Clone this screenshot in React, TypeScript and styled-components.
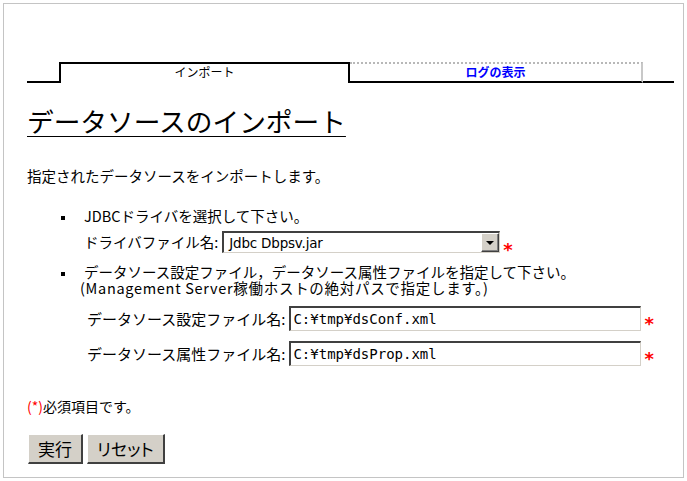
import styled, { createGlobalStyle } from 'styled-components';

const GlobalStyle = createGlobalStyle`
  html, body {
    margin: 0;
    padding: 0;
    background: #ffffff;
  }
  body {
    font-family: "Noto Sans CJK JP", "DejaVu Sans", sans-serif;
    color: #000000;
  }
`;

const JP = `"Noto Sans CJK JP", "DejaVu Sans", sans-serif`;

export default function App() {
  return (
    <>
      <GlobalStyle />
      <Frame>
        <TabBar>
          <TabGap $width={32} />
          <ActiveTab>インポート</ActiveTab>
          <InactiveTab>ログの表示</InactiveTab>
          <TabGap $width={31} />
        </TabBar>

        <Heading>データソースのインポート</Heading>

        <Description>指定されたデータソースをインポートします。</Description>

        <StepList>
          <StepItem>
            <Bullet />
            <StepText>
              <Line>JDBCドライバを選択して下さい。</Line>
            </StepText>
          </StepItem>
          <DriverRow>
            <DriverLabel>ドライバファイル名:</DriverLabel>
            <SelectBox>
              <SelectValue>Jdbc Dbpsv.jar</SelectValue>
              <ArrowButton>
                <Triangle />
              </ArrowButton>
            </SelectBox>
            <Required $drop={5}>*</Required>
          </DriverRow>
          <StepItem $top={11}>
            <Bullet />
            <StepText>
              <Line>データソース設定ファイル，データソース属性ファイルを指定して下さい。</Line>
              <Line $note>(Management Server稼働ホストの絶対パスで指定します。)</Line>
            </StepText>
          </StepItem>
        </StepList>

        <FileRows>
          <FileRow>
            <FileLabel>データソース設定ファイル名:</FileLabel>
            <PathInput defaultValue="C:¥tmp¥dsConf.xml" />
            <Required $drop={2}>*</Required>
          </FileRow>
          <FileRow>
            <FileLabel>データソース属性ファイル名:</FileLabel>
            <PathInput defaultValue="C:¥tmp¥dsProp.xml" />
            <Required $drop={2}>*</Required>
          </FileRow>
        </FileRows>

        <RequiredNote>
          <RedMark>(*)</RedMark>必須項目です。
        </RequiredNote>

        <Buttons>
          <Button type="button">実行</Button>
          <Button type="button">リセット</Button>
        </Buttons>
      </Frame>
    </>
  );
}

const Frame = styled.div`
  box-sizing: border-box;
  margin: 3px;
  width: 681px;
  height: 475px;
  border: 1px solid #c4c4c4;
  padding: 58px 0 0 23px;
`;

const TabBar = styled.div`
  display: flex;
  height: 21px;
`;

const TabGap = styled.div<{ $width: number }>`
  box-sizing: border-box;
  width: ${(p) => p.$width}px;
  height: 21px;
  border-bottom: 2px solid #000000;
`;

const ActiveTab = styled.div`
  box-sizing: border-box;
  width: 291px;
  height: 21px;
  border: 2px solid #000000;
  border-bottom: none;
  text-align: center;
  font-family: ${JP};
  font-size: 12px;
  line-height: 15px;
`;

const InactiveTab = styled.div`
  box-sizing: border-box;
  width: 293px;
  height: 21px;
  border-top: 2px dotted #b8b8b8;
  border-right: 2px solid #c8c8c8;
  border-bottom: 2px solid #000000;
  text-align: center;
  font-family: ${JP};
  font-size: 12px;
  font-weight: bold;
  line-height: 15px;
  color: #0000ff;
`;

const Heading = styled.h1`
  margin: 23px 0 0;
  width: fit-content;
  font-family: ${JP};
  font-size: 26.7px;
  font-weight: normal;
  line-height: 30px;
  text-decoration: underline;
  text-decoration-thickness: 1px;
  text-underline-offset: 4px;
`;

const Description = styled.p`
  margin: 31px 0 0;
  font-size: 14.5px;
  line-height: 18px;
`;

const StepList = styled.div`
  margin: 23px 0 0;
  padding-left: 34px;
`;

const StepItem = styled.div<{ $top?: number }>`
  display: flex;
  align-items: flex-start;
  margin-top: ${(p) => p.$top ?? 0}px;
`;

const Bullet = styled.span`
  flex: none;
  width: 4px;
  height: 4px;
  margin: 8px 19px 0 0;
  background: #000000;
`;

const StepText = styled.div`
  display: flex;
  flex-direction: column;
  font-size: 14.5px;
`;

const Line = styled.div<{ $note?: boolean }>`
  height: 16px;
  line-height: 16px;
  white-space: nowrap;
  margin-left: ${(p) => (p.$note ? -4 : 0)}px;
  letter-spacing: ${(p) => (p.$note ? 0.7 : 0)}px;
`;

const DriverRow = styled.div`
  display: flex;
  align-items: center;
  margin: 7px 0 0 23px;
`;

const DriverLabel = styled.span`
  font-size: 14.5px;
  line-height: 18px;
  margin-right: 4px;
`;

const SelectBox = styled.div`
  box-sizing: border-box;
  display: flex;
  align-items: center;
  width: 278px;
  height: 22px;
  border-top: 2px solid #404040;
  border-left: 2px solid #404040;
  border-right: 1px solid #d4d0c8;
  border-bottom: 1px solid #d4d0c8;
  background: #ffffff;
`;

const SelectValue = styled.span`
  flex: 1;
  padding-left: 5px;
  font-family: "DejaVu Sans", sans-serif;
  font-size: 13.5px;
  letter-spacing: -0.2px;
`;

const ArrowButton = styled.span`
  box-sizing: border-box;
  display: flex;
  align-items: center;
  justify-content: center;
  width: 18px;
  height: 19px;
  background: #d4d0c8;
  border-top: 1px solid #ffffff;
  border-left: 1px solid #ffffff;
  border-right: 1px solid #404040;
  border-bottom: 1px solid #404040;
  box-shadow: inset -1px -1px 0 #808080;
`;

const Triangle = styled.span`
  width: 0;
  height: 0;
  border-left: 4px solid transparent;
  border-right: 4px solid transparent;
  border-top: 4px solid #000000;
`;

const Required = styled.span<{ $drop: number }>`
  margin-left: 3px;
  padding-top: ${(p) => 6 + p.$drop}px;
  margin-bottom: ${(p) => -p.$drop}px;
  color: #ff0000;
  font-family: "DejaVu Sans", sans-serif;
  font-size: 18px;
  font-weight: bold;
  line-height: 14px;
`;

const FileRows = styled.div`
  display: flex;
  flex-direction: column;
  gap: 10px;
  margin: 10px 0 0 60px;
`;

const FileRow = styled.div`
  display: flex;
  align-items: center;
`;

const FileLabel = styled.span`
  font-size: 15px;
  line-height: 18px;
  margin-right: 4px;
`;

const PathInput = styled.input`
  box-sizing: border-box;
  width: 352px;
  height: 25px;
  margin: 0;
  padding: 0 0 0 2px;
  border-top: 2px solid #404040;
  border-left: 2px solid #404040;
  border-right: 1px solid #d4d0c8;
  border-bottom: 1px solid #d4d0c8;
  font-family: "DejaVu Sans Mono", monospace;
  font-size: 14px;
  color: #000000;
  background: #ffffff;
  outline: none;
`;

const RequiredNote = styled.p`
  margin: 31px 0 0;
  font-size: 14px;
  line-height: 18px;
`;

const RedMark = styled.span`
  color: #ff0000;
`;

const Buttons = styled.div`
  display: flex;
  gap: 4px;
  margin: 19px 0 0 1px;
`;

const Button = styled.button`
  box-sizing: border-box;
  height: 30px;
  padding: 0 9px;
  background: #d4d0c8;
  border-top: 1px solid #ffffff;
  border-left: 1px solid #ffffff;
  border-right: 2px solid #404040;
  border-bottom: 2px solid #404040;
  font-family: ${JP};
  font-size: 17px;
  font-feature-settings: "palt";
  color: #000000;
  cursor: pointer;
`;
